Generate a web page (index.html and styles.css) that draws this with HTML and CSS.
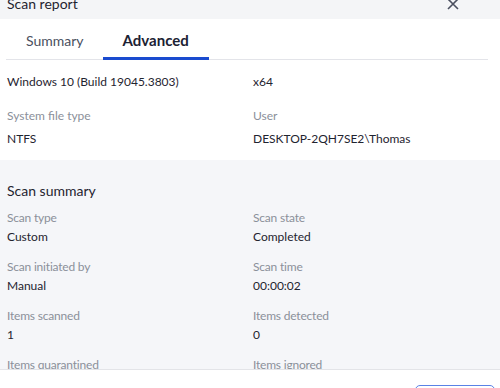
FILE: index.html
```html
<!DOCTYPE html>
<html lang="en">
<head>
  <meta charset="UTF-8">
  <title>Scan report</title>
  <link rel="stylesheet" href="styles.css">
</head>
<body>
  <div class="dialog">
    <div class="header">
      <span class="title">Scan report</span>
      <svg class="close" width="14" height="14" viewBox="0 0 14 14">
        <path d="M2 -1 L12 9 M12 -1 L2 9" stroke="#4b5060" stroke-width="1.6" fill="none"/>
      </svg>
    </div>

    <div class="tabs">
      <div class="tab">Summary</div>
      <div class="tab active">Advanced</div>
    </div>

    <div class="info">
      <div class="grid">
        <div class="cell"><div class="value">Windows 10 (Build 19045.3803)</div></div>
        <div class="cell"><div class="value">x64</div></div>
        <div class="cell"><div class="label">System file type</div><div class="value">NTFS</div></div>
        <div class="cell"><div class="label">User</div><div class="value">DESKTOP-2QH7SE2\Thomas</div></div>
      </div>
    </div>

    <div class="summary">
      <h2>Scan summary</h2>
      <div class="grid tight">
        <div class="cell"><div class="label">Scan type</div><div class="value">Custom</div></div>
        <div class="cell"><div class="label">Scan state</div><div class="value">Completed</div></div>
        <div class="cell"><div class="label">Scan initiated by</div><div class="value">Manual</div></div>
        <div class="cell"><div class="label">Scan time</div><div class="value">00:00:02</div></div>
        <div class="cell"><div class="label">Items scanned</div><div class="value">1</div></div>
        <div class="cell"><div class="label">Items detected</div><div class="value">0</div></div>
        <div class="cell"><div class="label">Items quarantined</div></div>
        <div class="cell"><div class="label">Items ignored</div></div>
      </div>
    </div>

    <div class="footer">
      <button class="btn" aria-label="Close"></button>
    </div>
  </div>
</body>
</html>
```

FILE: styles.css
```css
* {
  box-sizing: border-box;
}

body {
  margin: 0;
  font-family: 'Lato', sans-serif;
  color: #1f2430;
  background: #fff;
  overflow: hidden;
}

.dialog {
  width: 500px;
  height: 388px;
  display: flex;
  flex-direction: column;
  overflow: hidden;
}

.header {
  height: 19px;
  flex: none;
  background-color: #f4f5f7;
  display: flex;
  justify-content: space-between;
  padding: 0 40px 0 7px;
  overflow: hidden;
}

.title {
  font-size: 14px;
  line-height: 18px;
  margin-top: -5px;
  color: #1f2430;
}

.tabs {
  flex: none;
  display: flex;
  margin: 0 12px 0 6px;
  height: 41px;
  border-bottom: 1px solid #e3e4e9;
}

.tab {
  padding: 0 19px 0 20px;
  font-size: 14px;
  line-height: 43px;
  color: #4a5060;
}

.tab.active {
  padding: 0 20px;
  font-size: 15px;
  font-weight: bold;
  color: #1c2233;
  border-bottom: 3px solid #1a4bcf;
  margin-bottom: -1px;
  line-height: 42px;
}

.info {
  flex: none;
  padding: 13px 7px 14px;
  height: 100px;
}

.grid {
  display: grid;
  grid-template-columns: 246px 1fr;
  row-gap: 15px;
}

.grid.tight {
  row-gap: 11px;
}

.label {
  font-size: 12px;
  line-height: 20px;
  color: #8b909a;
}

.value {
  font-size: 12px;
  line-height: 18px;
  color: #1f2430;
}

.info .label {
  margin-bottom: 4px;
}

.summary {
  flex: none;
  height: 210px;
  background-color: #f5f6f9;
  padding: 21px 7px 0;
  border-bottom: 1px solid #e3e4e8;
  overflow: hidden;
}

.summary h2 {
  margin: 0 0 7px;
  font-size: 14px;
  line-height: 20px;
  font-weight: normal;
  color: #1f2430;
}

.summary .label {
  letter-spacing: -0.2px;
}

.footer {
  flex: 1;
  display: flex;
  justify-content: flex-end;
  padding: 15px 5px 0;
}

.btn {
  width: 80px;
  height: 32px;
  border: 1px solid #5a82e6;
  border-radius: 5px;
  background: #fff;
}
```
